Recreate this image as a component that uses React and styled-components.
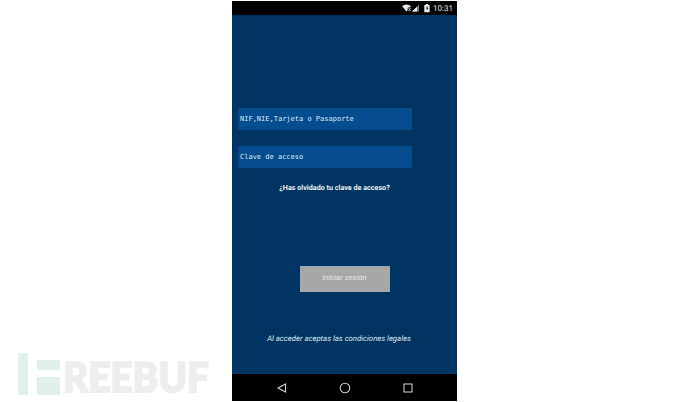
import React from "react";
import styled, { createGlobalStyle } from "styled-components";

const GlobalStyle = createGlobalStyle`
  * { box-sizing: border-box; }
  body { margin: 0; background: #fff; text-rendering: geometricPrecision; }
`;

const Page = styled.main`
  width: 690px;
  height: 402px;
  display: grid;
  grid-template-columns: 232px 225px 1fr;
  padding-top: 1px;
  font-family: Roboto, "Liberation Sans", sans-serif;
`;

const Brand = styled.aside`
  display: flex;
  align-items: flex-end;
  padding: 0 0 0 16px;
`;

const BrandLogo = styled.svg`
  width: 200px;
  height: 66px;
  overflow: visible;
`;

const Phone = styled.section`
  height: 400px;
  display: flex;
  flex-direction: column;
  background: #003463;
`;

const StatusBar = styled.header`
  height: 14px;
  display: flex;
  align-items: center;
  justify-content: flex-end;
  padding-right: 4px;
  background: #000;
  color: #e4e4e4;
`;

const StatusIcons = styled.svg`
  width: 28px;
  height: 12px;
  fill: #ececec;
`;

const Clock = styled.time`
  margin-left: 3px;
  font-size: 8px;
  line-height: 15px;
`;

const LoginForm = styled.div`
  flex: 1;
  display: flex;
  flex-direction: column;
  align-items: center;
  padding-top: 93px;
`;

const Field = styled.div`
  align-self: flex-start;
  width: 174px;
  height: 22px;
  margin: 0 0 16px 6px;
  padding-left: 2px;
  border-radius: 1px;
  background: #044c8d;
  color: #dbe9f5;
  font: 7px/22px "DejaVu Sans Mono", "Liberation Mono", monospace;
  white-space: pre;
`;

const ForgotLink = styled.a`
  height: 12px;
  margin: -2px 20px 0 0;
  font-size: 7.2px;
  font-weight: 700;
  line-height: 12px;
  color: #edf3f8;
  white-space: nowrap;
`;

const SubmitButton = styled.button`
  width: 90px;
  height: 26px;
  margin-top: 72px;
  padding: 0 0 3px;
  border: 1px solid #9aa8b2;
  border-radius: 0;
  background: #a7a7a7;
  color: #e6e6e6;
  font: italic 7.75px/20px Roboto, "Liberation Sans", sans-serif;
`;

const Legal = styled.p`
  margin: 41px 11px 0 0;
  font-size: 7.75px;
  font-style: italic;
  line-height: 12px;
  color: #dce7f0;
  white-space: nowrap;
`;

const NavBar = styled.nav`
  height: 27px;
  display: flex;
  align-items: center;
  justify-content: center;
  gap: 51px;
  background: #000;
`;

const NavIcon = styled.svg`
  width: 12px;
  height: 12px;
  fill: none;
  stroke: #c9c9c9;
  stroke-width: 1.1;
`;

export default function App() {
  return (
    <>
      <GlobalStyle />
      <Page>
        <Brand>
          <BrandLogo viewBox="0 -15 200 66">
            <g fill="#e1f1ea">
              <path d="M2 2h10v42H2zM21 9h23v10H21zM21 26h23v18H21z" />
            </g>
            <text
              x="47"
              y="41"
              fill="#eee"
              stroke="#eee"
              strokeWidth="1.8"
              fontFamily="Lato, sans-serif"
              fontWeight="900"
              fontSize="41"
              textLength="146"
              lengthAdjust="spacingAndGlyphs"
            >
              REEBUF
            </text>
          </BrandLogo>
        </Brand>
        <Phone>
          <StatusBar>
            <StatusIcons viewBox="0 0 28 12">
              <path d="M0 4Q4.5 0.8 9 4L7.8 5.5H5.7V8L4.6 9.4z" />
              <path d="M6.4 6l2.2 3M8.6 6l-2.2 3" stroke="#e4e4e4" strokeWidth=".8" />
              <path d="M10 9.5L17 2.7V9.5z" fill="#777" />
              <path d="M10 9.5L15 4.7V9.5z" />
              <path d="M22.3 3h1.5V2h2.2v1h1.6v7.2h-5.3z" />
              <path d="M25.4 3.7l-1.5 2.7h1v2.1l1.5-2.8h-1z" fill="#111" />
            </StatusIcons>
            <Clock>10:31</Clock>
          </StatusBar>
          <LoginForm>
            <Field>NIF,NIE,Tarjeta o Pasaporte</Field>
            <Field>Clave de acceso</Field>
            <ForgotLink>¿Has olvidado tu clave de acceso?</ForgotLink>
            <SubmitButton type="button">Iniciar sesión</SubmitButton>
            <Legal>Al acceder aceptas las condiciones legales</Legal>
          </LoginForm>
          <NavBar>
            <NavIcon viewBox="0 0 12 12"><path d="M9.5 2v8L2 6z" /></NavIcon>
            <NavIcon viewBox="0 0 12 12"><circle cx="6" cy="6" r="4.8" /></NavIcon>
            <NavIcon viewBox="0 0 12 12"><path d="M2 2h8v8H2z" /></NavIcon>
          </NavBar>
        </Phone>
      </Page>
    </>
  );
}
